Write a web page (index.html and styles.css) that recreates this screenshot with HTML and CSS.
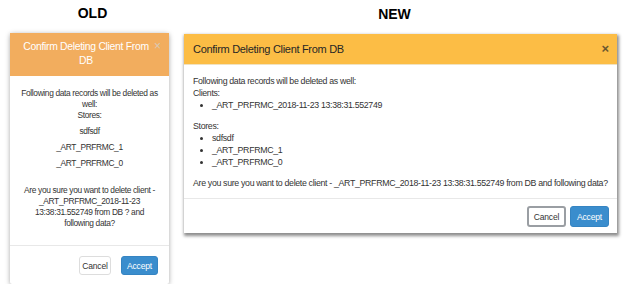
FILE: index.html
```html
<!DOCTYPE html>
<html lang="en">
<head>
    <meta charset="UTF-8">
    <title>Confirm Deleting Client - Old vs New</title>
    <link rel="stylesheet" href="styles.css">
</head>
<body>
    <div class="compare">
        <div class="column old">
            <h1 class="label">OLD</h1>
            <div class="modal old-modal">
                <div class="modal-header">
                    <h2>Confirm Deleting Client From DB</h2>
                    <span class="close">&times;</span>
                </div>
                <div class="modal-body">
                    <p>Following data records will be deleted as well:<br>Stores:</p>
                    <p class="item">sdfsdf</p>
                    <p class="item">_ART_PRFRMC_1</p>
                    <p class="item">_ART_PRFRMC_0</p>
                    <p class="question">Are you sure you want to delete client - _ART_PRFRMC_2018-11-23 13:38:31.552749 from DB ? and following data?</p>
                </div>
                <div class="modal-footer">
                    <button type="button" class="btn btn-cancel">Cancel</button>
                    <button type="button" class="btn btn-accept">Accept</button>
                </div>
            </div>
        </div>

        <div class="column new">
            <h1 class="label">NEW</h1>
            <div class="modal new-modal">
                <div class="modal-header">
                    <h2>Confirm Deleting Client From DB</h2>
                    <span class="close">&times;</span>
                </div>
                <div class="modal-body">
                    <p>Following data records will be deleted as well:</p>
                    <p>Clients:</p>
                    <ul>
                        <li>_ART_PRFRMC_2018-11-23 13:38:31.552749</li>
                    </ul>
                    <p>Stores:</p>
                    <ul>
                        <li>sdfsdf</li>
                        <li>_ART_PRFRMC_1</li>
                        <li>_ART_PRFRMC_0</li>
                    </ul>
                    <p>Are you sure you want to delete client - _ART_PRFRMC_2018-11-23 13:38:31.552749 from DB and following data?</p>
                </div>
                <div class="modal-footer">
                    <button type="button" class="btn btn-cancel focused">Cancel</button>
                    <button type="button" class="btn btn-accept">Accept</button>
                </div>
            </div>
        </div>
    </div>
</body>
</html>
```

FILE: styles.css
```css
body {
    margin: 0;
    background-color: #fff;
    font-family: "Liberation Sans", Arial, sans-serif;
    color: #333;
}
.compare {
    display: flex;
    align-items: flex-start;
}
.column {
    display: flex;
    flex-direction: column;
}
.old {
    width: 159px;
    margin-left: 10px;
}
.new {
    width: 433px;
    margin-left: 15px;
}
.label {
    margin: 5px 0 0 0;
    height: 28px;
    font-size: 14px;
    line-height: 16px;
    font-weight: bold;
    text-align: center;
    color: #000;
}
.old .label {
    padding-left: 6px;
}
.new .label {
    margin-top: 6px;
    padding-right: 12px;
}
.modal {
    background: #fff;
    display: flex;
    flex-direction: column;
}
.modal p {
    margin: 0;
}
.modal-header {
    position: relative;
    flex: none;
}
.modal-header h2 {
    margin: 0;
    font-weight: normal;
    letter-spacing: -0.3px;
}
.modal-body {
    flex: none;
}
.close {
    position: absolute;
}
.btn {
    font-family: "Liberation Sans", Arial, sans-serif;
    border-radius: 3px;
    cursor: pointer;
    padding: 0;
    letter-spacing: -0.2px;
}
.btn-cancel {
    background: #fff;
    color: #333;
}
.btn-accept {
    background-color: #3a8dcd;
    border: 1px solid #3584c2;
    color: #fff;
}

/* old dialog */
.old-modal {
    height: 251px;
    box-shadow: 0 1px 5px rgba(0, 0, 0, 0.35);
    border-radius: 2px;
}
.old-modal .modal-header {
    background-color: #f2ad5e;
    height: 43px;
    padding: 7px 17px 0 10px;
    box-sizing: border-box;
}
.old-modal .modal-header h2 {
    color: #fff;
    font-size: 10.4px;
    line-height: 14px;
    text-align: center;
}
.old-modal .close {
    top: 7px;
    right: 8px;
    font-size: 12px;
    line-height: 12px;
    color: #d9c9b6;
}
.old-modal .modal-body {
    padding: 12px 10px 0 10px;
    text-align: center;
    font-size: 8.4px;
    letter-spacing: -0.35px;
    line-height: 11px;
    height: 169px;
    box-sizing: border-box;
}
.old-modal .item {
    margin-top: 5px;
}
.old-modal .question {
    margin-top: 16px;
}
.old-modal .modal-footer {
    border-top: 1px solid #e8e8e8;
    flex: 1;
    display: flex;
    justify-content: flex-end;
    align-items: flex-start;
    gap: 10px;
    padding: 10px 11px 0 0;
}
.old-modal .btn {
    height: 19px;
    font-size: 8.5px;
}
.old-modal .btn-cancel {
    width: 32px;
    border: 1px solid #ddd;
}
.old-modal .btn-accept {
    width: 37px;
}

/* new dialog */
.new-modal {
    height: 199px;
    box-shadow: 1px 2px 3px 1px rgba(0, 0, 0, 0.45);
}
.new-modal .modal-header {
    background-color: #fcbd45;
    height: 30px;
    padding: 0 9px;
    display: flex;
    align-items: center;
    border-bottom: 1px solid #f1e2c0;
}
.new-modal .modal-header h2 {
    color: #262626;
    font-size: 11px;
}
.new-modal .close {
    top: 8px;
    right: 8px;
    font-size: 13px;
    line-height: 13px;
    font-weight: bold;
    color: #6a5730;
}
.new-modal .modal-body {
    padding: 10px 7px 9px 9px;
    font-size: 8.8px;
    letter-spacing: -0.33px;
    line-height: 12px;
}
.new-modal ul {
    margin: 0 0 9px 0;
    padding-left: 19px;
}
.new-modal .modal-footer {
    border-top: 1px solid #e8e8e8;
    flex: 1;
    display: flex;
    justify-content: flex-end;
    align-items: flex-start;
    gap: 4px;
    padding: 7px 8px 0 0;
}
.new-modal .btn {
    height: 21px;
    width: 39px;
    font-size: 8.5px;
}
.new-modal .btn-cancel {
    border: 1px solid #ccc;
}
.new-modal .btn-cancel.focused {
    border: 2px solid #9a9ea3;
}
```
